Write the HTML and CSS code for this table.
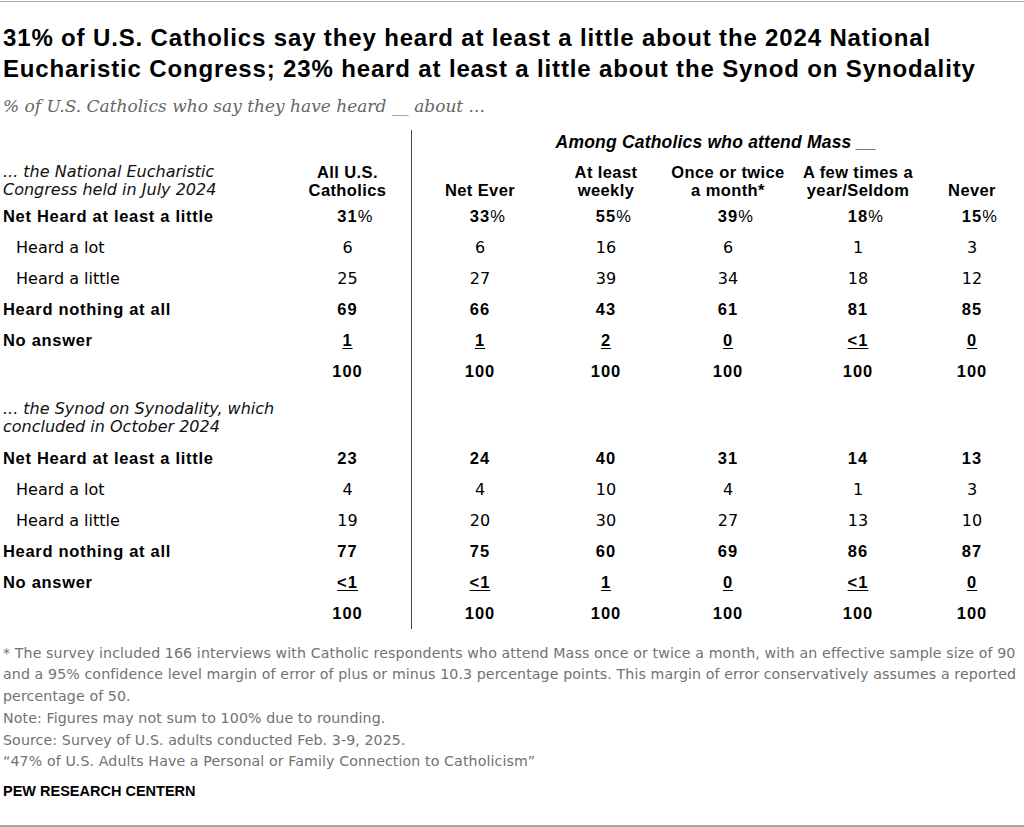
FILE: index.html
```html
<!DOCTYPE html>
<html lang="en">
<head>
<meta charset="utf-8">
<title>Pew Research Center – National Eucharistic Congress and Synod on Synodality</title>
<link rel="stylesheet" href="styles.css">
</head>
<body>
<div class="frame">
  <h1 class="title">31% of U.S. Catholics say they heard at least a little about the 2024 National Eucharistic Congress; 23% heard at least a little about the Synod on Synodality</h1>
  <p class="subtitle">% of U.S. Catholics who say they have heard __ about ...</p>

  <div class="table">
    <div class="row among">
      <div></div><div></div><div class="sep"></div>
      <div class="among-label">Among Catholics who attend Mass __</div>
    </div>
    <div class="row head">
      <div class="section">... the National Eucharistic<br>Congress held in July 2024</div>
      <div class="colhead">All U.S.<br>Catholics</div>
      <div class="sep"></div>
      <div class="colhead">Net Ever</div>
      <div class="colhead">At least<br>weekly</div>
      <div class="colhead">Once or twice<br>a month*</div>
      <div class="colhead">A few times a<br>year/Seldom</div>
      <div class="colhead">Never</div>
    </div>
    <div class="row bold">
      <div class="label">Net Heard at least a little</div>
      <div class="num">31<span class="pct">%</span></div><div class="sep"></div>
      <div class="num">33<span class="pct">%</span></div>
      <div class="num">55<span class="pct">%</span></div>
      <div class="num">39<span class="pct">%</span></div>
      <div class="num">18<span class="pct">%</span></div>
      <div class="num">15<span class="pct">%</span></div>
    </div>
    <div class="row">
      <div class="label sub">Heard a lot</div>
      <div class="num">6</div><div class="sep"></div>
      <div class="num">6</div><div class="num">16</div><div class="num">6</div><div class="num">1</div><div class="num">3</div>
    </div>
    <div class="row">
      <div class="label sub">Heard a little</div>
      <div class="num">25</div><div class="sep"></div>
      <div class="num">27</div><div class="num">39</div><div class="num">34</div><div class="num">18</div><div class="num">12</div>
    </div>
    <div class="row bold">
      <div class="label">Heard nothing at all</div>
      <div class="num">69</div><div class="sep"></div>
      <div class="num">66</div><div class="num">43</div><div class="num">61</div><div class="num">81</div><div class="num">85</div>
    </div>
    <div class="row bold">
      <div class="label">No answer</div>
      <div class="num u">1</div><div class="sep"></div>
      <div class="num u">1</div><div class="num u">2</div><div class="num u">0</div><div class="num u">&lt;1</div><div class="num u">0</div>
    </div>
    <div class="row bold">
      <div class="label"></div>
      <div class="num">100</div><div class="sep"></div>
      <div class="num">100</div><div class="num">100</div><div class="num">100</div><div class="num">100</div><div class="num">100</div>
    </div>

    <div class="row head2">
      <div class="section">... the Synod on Synodality, which<br>concluded in October 2024</div>
      <div></div><div class="sep"></div>
    </div>
    <div class="row bold">
      <div class="label">Net Heard at least a little</div>
      <div class="num">23</div><div class="sep"></div>
      <div class="num">24</div><div class="num">40</div><div class="num">31</div><div class="num">14</div><div class="num">13</div>
    </div>
    <div class="row">
      <div class="label sub">Heard a lot</div>
      <div class="num">4</div><div class="sep"></div>
      <div class="num">4</div><div class="num">10</div><div class="num">4</div><div class="num">1</div><div class="num">3</div>
    </div>
    <div class="row">
      <div class="label sub">Heard a little</div>
      <div class="num">19</div><div class="sep"></div>
      <div class="num">20</div><div class="num">30</div><div class="num">27</div><div class="num">13</div><div class="num">10</div>
    </div>
    <div class="row bold">
      <div class="label">Heard nothing at all</div>
      <div class="num">77</div><div class="sep"></div>
      <div class="num">75</div><div class="num">60</div><div class="num">69</div><div class="num">86</div><div class="num">87</div>
    </div>
    <div class="row bold">
      <div class="label">No answer</div>
      <div class="num u">&lt;1</div><div class="sep"></div>
      <div class="num u">&lt;1</div><div class="num u">1</div><div class="num u">0</div><div class="num u">&lt;1</div><div class="num u">0</div>
    </div>
    <div class="row bold">
      <div class="label"></div>
      <div class="num">100</div><div class="sep"></div>
      <div class="num">100</div><div class="num">100</div><div class="num">100</div><div class="num">100</div><div class="num">100</div>
    </div>
  </div>

  <div class="notes">
    <p>* The survey included 166 interviews with Catholic respondents who attend Mass once or twice a month, with an effective sample size of 90 and a 95% confidence level margin of error of plus or minus 10.3 percentage points. This margin of error conservatively assumes a reported percentage of 50.</p>
    <p>Note: Figures may not sum to 100% due to rounding.</p>
    <p>Source: Survey of U.S. adults conducted Feb. 3-9, 2025.</p>
    <p>“47% of U.S. Adults Have a Personal or Family Connection to Catholicism”</p>
  </div>
  <div class="brand">PEW RESEARCH CENTERN</div>
</div>
</body>
</html>
```

FILE: styles.css
```css
* { box-sizing: border-box; }
html, body { margin: 0; padding: 0; background: #fff; }
body {
  font-family: "DejaVu Sans", "Liberation Sans", sans-serif;
  color: #000;
  width: 1024px;
  height: 827px;
  overflow: hidden;
}
.frame {
  border-top: 1px solid #b0b0b0;
  border-bottom: 2px solid #a5a5a5;
  margin-top: 1px;
  height: 826px;
  padding: 20px 3px 0 3px;
}
.title {
  margin: 0;
  font-family: "Liberation Sans", Arial, sans-serif;
  font-size: 24px;
  line-height: 31px;
  font-weight: bold;
  width: 1000px;
  letter-spacing: 0.85px;
}
.subtitle {
  margin: 11px 0 0 0;
  font-family: "DejaVu Serif", Georgia, serif;
  font-style: italic;
  font-size: 17px;
  line-height: 22px;
  color: #666;
}
.table {
  margin-top: 13px;
  --cols: 287px 115px 12px 126px 126px 118px 142px 86px;
  font-size: 16px;
}
.row {
  display: grid;
  grid-template-columns: var(--cols);
  height: 31px;
  align-items: center;
}
.sep {
  align-self: stretch;
  height: 100%;
  background: linear-gradient(#444, #444) center / 1px 100% no-repeat;
}
.among { height: 33px; align-items: start; }
.among-label {
  grid-column: 4 / -1;
  text-align: center;
  font-family: "Liberation Sans", Arial, sans-serif;
  font-weight: bold;
  font-style: italic;
  font-size: 17.5px;
  padding-top: 2px;
  letter-spacing: 0.2px;
}
.head { height: 38px; align-items: end; padding-bottom: 2px; }
.head .sep { margin-bottom: -2px; height: auto; }
.colhead {
  text-align: center;
  font-family: "Liberation Sans", Arial, sans-serif;
  font-size: 16.5px;
  font-weight: bold;
  line-height: 18px;
  letter-spacing: 0.4px;
}
.section {
  font-style: italic;
  line-height: 18px;
  color: #111;
}
.head2 { height: 56px; align-items: start; }
.head2 .section { padding-top: 13px; }
.label { white-space: nowrap; }
.label.sub { padding-left: 13px; }
.bold {
  font-family: "Liberation Sans", Arial, sans-serif;
  font-size: 16.5px;
  font-weight: bold;
}
.bold .label { letter-spacing: 0.7px; }
.num { text-align: center; }
.bold .num { letter-spacing: 1px; }
.u { text-decoration: underline; text-underline-offset: 2px; }
.pct { display: inline-block; width: 0; font-weight: normal; text-align: left; letter-spacing: 0; }
.notes {
  margin-top: 13.5px;
  font-size: 14.2px;
  line-height: 21.8px;
  letter-spacing: 0.1px;
  color: #727272;
}
.notes p { margin: 0; }
.brand {
  margin-top: 7px;
  font-family: "Liberation Sans", Arial, sans-serif;
  font-size: 14.5px;
  font-weight: bold;
  line-height: 22px;
}
```
